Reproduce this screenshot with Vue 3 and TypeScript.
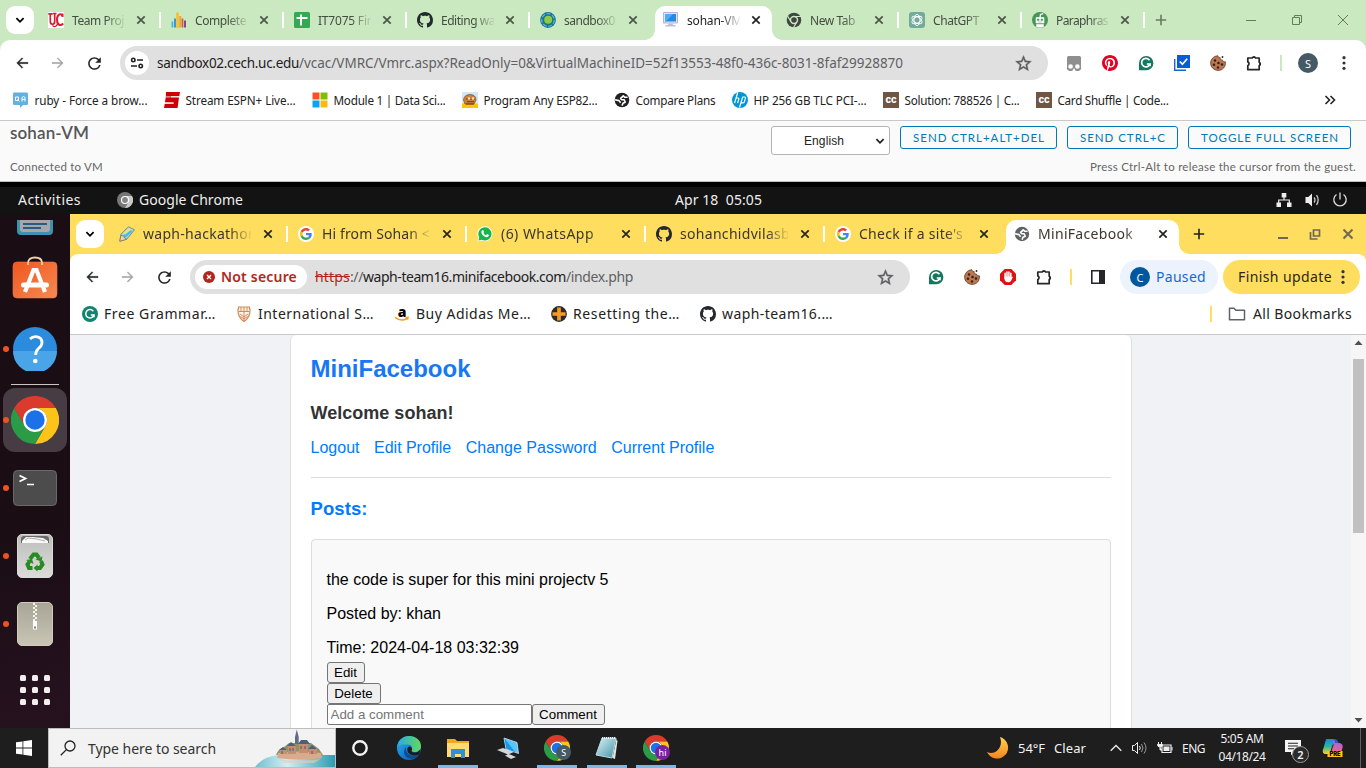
<script setup lang="ts">
interface Tab { icon: string; title: string; width: number; active?: boolean; sep?: boolean }
interface Mark { icon: string; label: string; width: number }

const outerTabs: Tab[] = [
  { icon: 'uc', title: 'Team Proj', width: 52, sep: true },
  { icon: 'bars', title: 'Complete', width: 51, sep: true },
  { icon: 'sheet', title: 'IT7075 Fin', width: 56, sep: true },
  { icon: 'github', title: 'Editing wa', width: 54, sep: true },
  { icon: 'globe', title: 'sandbox0', width: 51 },
  { icon: 'monitor', title: 'sohan-VM', width: 55, active: true },
  { icon: 'chromedark', title: 'New Tab', width: 45, sep: true },
  { icon: 'gpt', title: 'ChatGPT', width: 46, sep: true },
  { icon: 'robot', title: 'Paraphras', width: 52, sep: true }
]
const innerTabs: Tab[] = [
  { icon: 'pencil', title: 'waph-hackathon', width: 114, sep: true },
  { icon: 'google', title: 'Hi from Sohan <', width: 108, sep: true },
  { icon: 'whatsapp', title: '(6) WhatsApp', width: 93, sep: true },
  { icon: 'github', title: 'sohanchidvilasb', width: 110, sep: true },
  { icon: 'google', title: "Check if a site's", width: 104 },
  { icon: 'earth', title: 'MiniFacebook', width: 95, active: true }
]
const outerMarks: Mark[] = [
  { icon: 'qa', label: 'ruby - Force a brow...', width: 113 },
  { icon: 'espn', label: 'Stream ESPN+ Live...', width: 110 },
  { icon: 'ms', label: 'Module 1 | Data Sci...', width: 112 },
  { icon: 'bot', label: 'Program Any ESP82...', width: 114 },
  { icon: 'earthdark', label: 'Compare Plans', width: 80 },
  { icon: 'hp', label: 'HP 256 GB TLC PCI-...', width: 113 },
  { icon: 'cc', label: 'Solution: 788526 | C...', width: 115 },
  { icon: 'cc', label: 'Card Shuffle | Code...', width: 111 }
]
const innerMarks: Mark[] = [
  { icon: 'gram', label: 'Free Grammar…', width: 112 },
  { icon: 'shield', label: 'International S…', width: 116 },
  { icon: 'amazon', label: 'Buy Adidas Me…', width: 115 },
  { icon: 'plusbadge', label: 'Resetting the…', width: 107 },
  { icon: 'github', label: 'waph-team16.…', width: 111 }
]
const outerExt = ['tamper', 'pinterest', 'grammarly', 'check', 'cookie', 'puzzle']
const innerExt = ['grammarly', 'cookie', 'adblock', 'puzzle']
const links = [
  { label: 'Logout', width: 49 },
  { label: 'Edit Profile', width: 77 },
  { label: 'Change Password', width: 131 },
  { label: 'Current Profile', width: 103 }
]
const apps = [
  { icon: 'cortana', open: false },
  { icon: 'edge', open: false },
  { icon: 'explorer', open: true },
  { icon: 'remote', open: false },
  { icon: 'chrome', open: true, badge: 'S', tint: 'slate' },
  { icon: 'notepad', open: true },
  { icon: 'chrome', open: true, badge: 'hi', tint: 'purple' }
]

// Tracks a label out (or in) so it occupies the given width in pixels.
const vFit = {
  mounted(el: HTMLElement, binding: { value: number }) {
    const count = (el.textContent || '').length
    const natural = el.getBoundingClientRect().width
    if (count) el.style.letterSpacing = (binding.value - natural) / count + 'px'
  }
}
</script>

<template>
  <div class="screen">
    <svg class="defs" width="0" height="0" aria-hidden="true">
      <linearGradient id="g-edge" x1="0" y1="0" x2="1" y2="1"><stop offset="0" stop-color="#2fb4e8" /><stop offset=".45" stop-color="#1b86d6" /><stop offset="1" stop-color="#0c4f9c" /></linearGradient>
      <linearGradient id="g-edge2" x1="0" y1="0" x2="1" y2="0"><stop offset="0" stop-color="#29a9e8" /><stop offset="1" stop-color="#63d85a" /></linearGradient>
      <linearGradient id="g-moon" x1="0" y1="0" x2="0" y2="1"><stop offset="0" stop-color="#ffd34f" /><stop offset="1" stop-color="#f18421" /></linearGradient>
      <linearGradient id="g-cop" x1="0" y1="0" x2="0" y2="1"><stop offset="0" stop-color="#1d86e0" /><stop offset=".5" stop-color="#2bb6a0" /><stop offset="1" stop-color="#ffd21c" /></linearGradient>
      <linearGradient id="g-cop2" x1="0" y1="0" x2="0" y2="1"><stop offset="0" stop-color="#a45cf0" /><stop offset="1" stop-color="#f4667f" /></linearGradient>
      <linearGradient id="g-orange" x1="0" y1="0" x2="1" y2="1"><stop offset="0" stop-color="#f1561f" /><stop offset="1" stop-color="#f58a52" /></linearGradient>
      <linearGradient id="g-water" x1="0" y1="0" x2="1" y2="0"><stop offset="0" stop-color="#6fc0d0" /><stop offset=".4" stop-color="#d3eef3" /><stop offset="1" stop-color="#299db0" /></linearGradient>
      <linearGradient id="g-note" x1="0" y1="0" x2="1" y2="1"><stop offset="0" stop-color="#dff3f7" /><stop offset="1" stop-color="#3f93a6" /></linearGradient>
      <linearGradient id="g-bin" x1="0" y1="0" x2="0" y2="1"><stop offset="0" stop-color="#bdbdbb" /><stop offset="1" stop-color="#dcdcda" /></linearGradient>
      <linearGradient id="g-zip" x1="0" y1="0" x2="0" y2="1"><stop offset="0" stop-color="#a8a496" /><stop offset="1" stop-color="#c9c6b6" /></linearGradient>

      <symbol id="i-x" viewBox="0 0 10 10"><path d="M1.300 1.300l7.400 7.400M8.700 1.300L1.300 8.700" stroke="currentColor" stroke-width="1.700" /></symbol>
      <symbol id="i-down" viewBox="0 0 10 10"><path d="M1.400 3.200L5 6.800l3.600-3.600" fill="none" stroke="currentColor" stroke-width="1.800" /></symbol>
      <symbol id="i-plus" viewBox="0 0 12 12"><path d="M6 .8v10.400M.8 6h10.400" stroke="currentColor" stroke-width="1.600" /></symbol>
      <symbol id="i-back" viewBox="0 0 24 24"><path fill="currentColor" stroke="currentColor" stroke-width=".5" d="M21 11H7.800l5.600-5.600L12 4l-8 8 8 8 1.400-1.400L7.800 13H21z" /></symbol>
      <symbol id="i-fwd" viewBox="0 0 24 24"><path fill="currentColor" stroke="currentColor" stroke-width=".3" d="M3 11h13.200l-5.600-5.600L12 4l8 8-8 8-1.400-1.400 5.600-5.600H3z" /></symbol>
      <symbol id="i-reload" viewBox="0 0 24 24"><path fill="currentColor" d="M17.650 6.350A7.958 7.958 0 0 0 12 4c-4.420 0-7.990 3.580-7.990 8s3.570 8 7.990 8c3.730 0 6.840-2.550 7.730-6h-2.080A5.990 5.990 0 0 1 12 18c-3.310 0-6-2.690-6-6s2.690-6 6-6c1.660 0 3.140.69 4.220 1.780L13 11h7V4l-2.350 2.350z" /></symbol>
      <symbol id="i-star" viewBox="0 0 24 24"><path fill="currentColor" stroke="currentColor" stroke-width=".5" d="M22 9.240l-7.190-.62L12 2 9.190 8.630 2 9.240l5.460 4.730L5.820 21 12 17.270 18.180 21l-1.630-7.030L22 9.240zM12 15.400l-3.760 2.270 1-4.280-3.320-2.880 4.380-.38L12 6.100l1.710 4.040 4.380.38-3.320 2.880 1 4.280L12 15.400z" /></symbol>
      <symbol id="i-tune" viewBox="0 0 16 16"><g fill="none" stroke="#202124" stroke-width="1.600"><circle cx="4.300" cy="5" r="1.700" /><path d="M8 5h6M2 11h6" /><circle cx="11.700" cy="11" r="1.700" /></g></symbol>
      <symbol id="i-dots" viewBox="0 0 16 16"><g fill="#333"><circle cx="8" cy="2.700" r="1.600" /><circle cx="8" cy="8" r="1.600" /><circle cx="8" cy="13.300" r="1.600" /></g></symbol>

      <symbol id="i-uc" viewBox="0 0 16 16"><path d="M0 0h16v16H0z" fill="#fff" /><g fill="none" stroke="#d81e34"><path d="M.3 1.800h4.500M2.300 1.800v7.500c0 4 4.400 4 4.400 0V1.500M5 1.500h3.500" stroke-width="1.700" /><path d="M14.500 5V1.500M14.500 4C12.500.8 9 2.500 9 7.500s3 7.200 6.200 4" stroke-width="2" /><path d="M4.500 13.500c2.500 2.300 5.500.3 5-3.500" stroke-width="1.200" /></g></symbol>
      <symbol id="i-bars" viewBox="0 0 16 16"><path d="M1.400 9.500v6" stroke="#3db8e8" stroke-width="1.800" /><path d="M4 6.500v9" stroke="#2d8fd0" stroke-width="1.800" /><path d="M6.500 1.500v14" stroke="#f5c02d" stroke-width="2.600" stroke-linecap="round" /><path d="M9.200 4v11.500" stroke="#efa13a" stroke-width="2" /><path d="M11.500 6.500v9" stroke="#d9573c" stroke-width="1.700" /><path d="M14 8.500v7" stroke="#6a3f8d" stroke-width="1.800" /></symbol>
      <symbol id="i-sheet" viewBox="0 0 16 16"><rect width="16" height="16" rx="1.500" fill="#34a853" /><path d="M2.500 6h11M7 2.500v11" stroke="#fff" stroke-width="2" /></symbol>
      <symbol id="i-github" viewBox="0 0 16 16"><path fill="#24292f" d="M8 0C3.58 0 0 3.58 0 8c0 3.54 2.29 6.53 5.47 7.59.4.07.55-.17.55-.38 0-.19-.01-.82-.01-1.49-2.01.37-2.53-.49-2.69-.94-.09-.23-.48-.94-.82-1.13-.28-.15-.68-.52-.01-.53.63-.01 1.08.58 1.23.82.72 1.21 1.87.87 2.33.66.07-.52.28-.87.51-1.07-1.78-.2-3.64-.89-3.64-3.95 0-.87.31-1.59.82-2.15-.08-.2-.36-1.02.08-2.12 0 0 .67-.21 2.2.82.64-.18 1.32-.27 2-.27.68 0 1.36.09 2 .27 1.53-1.04 2.2-.82 2.2-.82.44 1.1.16 1.92.08 2.12.51.56.82 1.27.82 2.15 0 3.07-1.87 3.75-3.65 3.95.29.25.54.73.54 1.48 0 1.07-.01 1.93-.01 2.2 0 .21.15.46.55.38A8.013 8.013 0 0 0 16 8c0-4.42-3.58-8-8-8z" /></symbol>
      <symbol id="i-globe" viewBox="0 0 16 16"><circle cx="8" cy="8" r="7.900" fill="#1c6f9e" /><circle cx="8" cy="8" r="6.300" fill="none" stroke="#57b5d8" stroke-width="1.300" stroke-dasharray="4 1.500" /><circle cx="8" cy="8" r="5" fill="#247a55" /><circle cx="8.200" cy="7.800" r="4" fill="#8ccb4a" /></symbol>
      <symbol id="i-monitor" viewBox="0 0 16 16"><path d="M.5.500h14v10.500H.5z" fill="#e6e2f0" stroke="#b9b2cf" /><path d="M2 2h11v7.500H2z" fill="#2389e4" /><path d="M2 2h8L3 9.500H2z" fill="#52aef4" /><path d="M5.500 11.500h4l.5 1.500h2.500v1.500h-10V13H5z" fill="#c3bdd3" /></symbol>
      <symbol id="i-chromedark" viewBox="0 0 16 16"><circle cx="8" cy="8" r="7.300" fill="#3f4540" /><circle cx="8" cy="8" r="3.500" fill="none" stroke="#cbe9c0" stroke-width="1.400" /><path d="M8 4.500h7M5 9.800L1.500 4M11 9.800L7.500 15.500" stroke="#cbe9c0" stroke-width="1.200" /></symbol>
      <symbol id="i-gpt" viewBox="0 0 16 16"><rect width="16" height="16" rx="3" fill="#74aa9c" /><g fill="none" stroke="#fff" stroke-width=".9"><ellipse cx="8" cy="8" rx="3" ry="5.600" /><ellipse cx="8" cy="8" rx="3" ry="5.600" transform="rotate(60 8 8)" /><ellipse cx="8" cy="8" rx="3" ry="5.600" transform="rotate(120 8 8)" /></g></symbol>
      <symbol id="i-robot" viewBox="0 0 16 16"><circle cx="8" cy="8" r="8" fill="#499557" /><path d="M4 5.500h8V11H4zM4.500 12.500h7v2.200q-3.500 1.300-7 0z" fill="#fff" stroke="#fff" stroke-width=".6" stroke-linejoin="round" /><path d="M8 5.500L8.500 2.500l2.700-.8" fill="none" stroke="#fff" stroke-width="1.300" /><path d="M5.300 7h1.700v1.500H5.300zM9 7h1.700v1.500H9zM6.300 10h3.400" fill="#499557" stroke="#499557" stroke-width=".5" /></symbol>

      <symbol id="i-tamper" viewBox="0 0 16 16"><path d="M2.500 1h11Q15 1 15 2.500V12a3.200 3.200 0 0 1-6.500 1.500h-1A3.200 3.200 0 0 1 1 12V2.500Q1 1 2.500 1z" fill="#8f8f8f" /><circle cx="4.600" cy="11.500" r="2.300" fill="#fff" /><circle cx="11.400" cy="11.500" r="2.300" fill="#fff" /></symbol>
      <symbol id="i-pinterest" viewBox="0 0 24 24"><path fill="#e60023" d="M12 0C5.370 0 0 5.370 0 12c0 5.080 3.160 9.420 7.620 11.170-.1-.95-.2-2.4.04-3.440.22-.94 1.410-5.960 1.410-5.960s-.36-.72-.36-1.780c0-1.670.97-2.910 2.170-2.910 1.020 0 1.520.77 1.520 1.690 0 1.030-.66 2.570-1 4-.28 1.190.6 2.170 1.780 2.170 2.130 0 3.770-2.250 3.770-5.5 0-2.870-2.060-4.880-5.010-4.880-3.410 0-5.420 2.560-5.420 5.200 0 1.030.4 2.130.89 2.730.1.12.11.22.08.34l-.33 1.360c-.05.22-.17.27-.4.160-1.500-.7-2.430-2.880-2.430-4.640 0-3.780 2.750-7.250 7.920-7.250 4.160 0 7.390 2.960 7.390 6.920 0 4.130-2.600 7.460-6.220 7.460-1.210 0-2.360-.63-2.750-1.380l-.75 2.850c-.27 1.040-1 2.350-1.490 3.150C9.570 23.810 10.760 24 12 24c6.630 0 12-5.370 12-12S18.630 0 12 0z" /></symbol>
      <symbol id="i-grammarly" viewBox="0 0 16 16"><path d="M1 15.300V8a7.200 7.200 0 1 1 7.200 7.300z" fill="#15775f" /><path d="M11.500 5.200A4.300 4.300 0 1 0 12 9H8.800M12 9.200v2" fill="none" stroke="#fff" stroke-width="1.700" /></symbol>
      <symbol id="i-gram" viewBox="0 0 16 16"><circle cx="8" cy="8" r="8" fill="#11836f" /><path d="M11.300 5.200A4.200 4.200 0 1 0 12 9H8.800M12 8.800v2.400" fill="none" stroke="#fff" stroke-width="1.500" /></symbol>
      <symbol id="i-check" viewBox="0 0 16 16"><path d="M.7 4v11.300H12" fill="none" stroke="#1b65d5" stroke-width="1.400" /><path d="M3 0h13v13H3z" fill="#0c5bd6" /><path d="M5.800 6.500l2.600 2.700 4.800-5.400" fill="none" stroke="#fff" stroke-width="1.700" /></symbol>
      <symbol id="i-cookie" viewBox="0 0 16 16"><path d="M8 .8c.2 1.500 1 2 2.200 1.700-.3 1.700.8 2.800 2.300 2.500.2 1.500 1.200 2 2.900 1.800C16 12 12.500 15.400 8.200 15.400S.6 12 .6 8.300 3.500.8 8 .8z" fill="#b97850" stroke="#4c2a1e" stroke-width=".7" /><g fill="#3b2018"><circle cx="5" cy="5.500" r="1.200" /><circle cx="4" cy="9.800" r="1.300" /><circle cx="8.500" cy="8" r="1.300" /><circle cx="8" cy="12.500" r="1.200" /><circle cx="12" cy="9.500" r="1.300" /><circle cx="12.500" cy="2" r=".9" /></g></symbol>
      <symbol id="i-puzzle" viewBox="0 0 16 16"><path d="M1.800 3h4.500a1.700 1.700 0 0 1 3.200 0h3.700v4.300a1.700 1.700 0 0 1 0 3.200v4.200H1.800v-4.100a2 2 0 0 0 0-3.700z" fill="none" stroke="#252628" stroke-width="1.700" stroke-linejoin="round" /><path d="M6.300 3a1.700 1.700 0 0 1 3.200 0zM13.200 7.300a1.700 1.700 0 0 1 0 3.200z" fill="#252628" /></symbol>
      <symbol id="i-adblock" viewBox="0 0 16 16"><path d="M4.700 0h6.600L16 4.700v6.600L11.300 16H4.700L0 11.300V4.700z" fill="#dd1212" /><path d="M5.100 9V4.300M7 8V2.900M8.900 8V2.900M10.800 9V4.300" stroke="#fff" stroke-width="1.500" stroke-linecap="round" /><path d="M4.400 7.500h7.200v.8l1.500-.8-2 4.300q-.8 1.500-2.800 1.500-3.900 0-3.900-4z" fill="#fff" /></symbol>
      <symbol id="i-panel" viewBox="0 0 16 16"><path d="M1.800 1.800h12.400v12.400H1.800z" fill="none" stroke="#252628" stroke-width="1.600" /><path d="M9 1h6v14H9z" fill="#252628" /></symbol>
      <symbol id="i-folder" viewBox="0 0 18 16"><path d="M1.500 2.300H6l1.800 1.900h8.700v9.500h-15z" fill="none" stroke="#5f6368" stroke-width="1.500" stroke-linejoin="round" /></symbol>

      <symbol id="i-qa" viewBox="0 0 16 16"><path d="M1.300.5h12.400q1.300 0 1.300 1.300v9.900q0 1.300-1.300 1.300H10l-3 3v-3H1.300Q0 13 0 11.700V1.800Q0 .5 1.300.5z" fill="#64b0df" /><path d="M2.500 5h3v3.500h-3zM4.500 7.500l1.800 2M9 9.500V5.500L10.500 4.500 12 5.500v4M9 7.500h3" fill="none" stroke="#fff" stroke-width="1" /></symbol>
      <symbol id="i-espn" viewBox="0 0 16 16"><path d="M2 0h14l-.7 4.300H6.500v1H15L13.600 16H0l.7-4.300h8.800V10.500H.900L1.800 5z" fill="#ce0007" /><path d="M1.600 4.900h4.600M7 4.900h8.200M.6 11h9" stroke="#fff" stroke-width=".8" /></symbol>
      <symbol id="i-ms" viewBox="0 0 16 16"><path d="M.5.500h7v7h-7z" fill="#f35325" /><path d="M8.500.5h7v7h-7z" fill="#81bc06" /><path d="M.5 8.500h7v7h-7z" fill="#05a6f0" /><path d="M8.500 8.500h7v7h-7z" fill="#ffba08" /></symbol>
      <symbol id="i-bot" viewBox="0 0 16 16"><path d="M0 0h16v16H0z" fill="#cfe9fa" /><path d="M0 11.500h16V16H0z" fill="#ffc400" /><path d="M1.500 8q.5-5 6-5.500Q14 2.500 14 8l-2 4H3z" fill="#cd8237" stroke="#79451d" stroke-width=".7" /><path d="M4 7h9M5 9.700h7M4 12h8" stroke="#6d3f1d" stroke-width="1" /><circle cx="7" cy="6.500" r="1.300" fill="#ffe3a7" /><circle cx="11" cy="6.500" r="1.300" fill="#ffe3a7" /></symbol>
      <symbol id="i-earthdark" viewBox="0 0 16 16"><circle cx="8" cy="8" r="7.300" fill="#202124" /><path d="M13.600 5.300h-3L9.300 3.800 6.600 6.400l1.200 1.400h2.400l1 2.400-2.200 1-1 2.400M1 7.800l4 .8 1.600 2.200" fill="none" stroke="#fff" stroke-width="1.600" stroke-linejoin="round" /></symbol>
      <symbol id="i-earth" viewBox="0 0 16 16"><circle cx="8" cy="8" r="7.200" fill="#5f6368" /><path d="M13.600 5.300h-3L9.300 3.800 6.600 6.400l1.200 1.400h2.400l1 2.400-2.200 1-1 2.400M1 7.800l4 .8 1.600 2.200" fill="none" stroke="#fff" stroke-width="1.600" stroke-linejoin="round" /></symbol>
      <symbol id="i-hp" viewBox="0 0 16 16"><circle cx="8" cy="8" r="8" fill="#0096d6" /><g fill="none" stroke="#fff" stroke-width="1.200"><path d="M5.700.5L2.600 11.200M4.100 6h2q1 0 .7 1.200l-1.200 4M10.700 4.800L7.500 15.500M10.700 5h2q1 0 .7 1.200l-1 3.600q-.3 1-1.300 1H9" /></g></symbol>
      <symbol id="i-cc" viewBox="0 0 16 16"><path d="M0 0h16v16H0z" fill="#6f5544" /><text x="8" y="11" text-anchor="middle" fill="#fff" font-family="Inter, sans-serif" font-weight="800" font-size="9.500" letter-spacing="-.2">cc</text></symbol>
      <symbol id="i-shield" viewBox="0 0 16 16"><path d="M2.500 1h11v2l.6.600Q14 12 8 15.500 2 12 1.900 3.600L2.500 3z" fill="#fff4e9" stroke="#cf8b58" stroke-width="1.200" /><path d="M2.500 5.500h11M5 1v4.500M8 1v14M11 1v4.500M4 8l4 3 4-3M4.500 10.500L8 13l3.500-2.500" fill="none" stroke="#cf8b58" stroke-width="1" /></symbol>
      <symbol id="i-amazon" viewBox="0 0 16 16"><text x="8" y="10.500" text-anchor="middle" font-family="Open Sans, sans-serif" font-weight="800" font-size="14">a</text><path d="M1 11.300q6.300 4.800 12 1.200M11.500 11.500l2.600-.2-.7 2.500" fill="none" stroke="#f6a11c" stroke-width="1.500" /></symbol>
      <symbol id="i-plusbadge" viewBox="0 0 16 16"><circle cx="8" cy="8" r="7.900" fill="#2d2b2a" /><path d="M8 1.500v13M1.500 8h13" stroke="#f79c20" stroke-width="3.700" /></symbol>
      <symbol id="i-pencil" viewBox="0 0 16 16"><path d="M.8 15.200L2 8 9.500.8l6 3L8 13z" fill="#9adcef" stroke="#7f8272" stroke-width=".9" /><path d="M4 9.500L11.500 4l2 1.400L6.500 12z" fill="#4bbce8" /><path d="M4.500 7L10 2l2.500 1.200L6 8.500z" fill="#f0e27a" /><path d="M2 9.500l3 .5.500 2L7.500 13.300.8 15.200z" fill="#ead6ad" stroke="#786e58" stroke-width=".7" /></symbol>
      <symbol id="i-google" viewBox="-8 -8 64 64"><circle cx="24" cy="24" r="32" fill="#fff" /><path fill="#EA4335" d="M24 9.500c3.540 0 6.710 1.220 9.210 3.600l6.850-6.850C35.900 2.380 30.470 0 24 0 14.620 0 6.510 5.380 2.560 13.220l7.980 6.190C12.430 13.720 17.740 9.500 24 9.500z" /><path fill="#4285F4" d="M46.980 24.550c0-1.570-.15-3.090-.38-4.550H24v9.020h12.940c-.58 2.960-2.260 5.480-4.780 7.180l7.730 6c4.510-4.180 7.090-10.360 7.090-17.650z" /><path fill="#FBBC05" d="M10.530 28.590c-.48-1.450-.76-2.990-.76-4.590s.27-3.140.76-4.590l-7.980-6.190C.92 16.460 0 20.120 0 24s.92 7.540 2.560 10.780l7.970-6.190z" /><path fill="#34A853" d="M24 48c6.480 0 11.930-2.130 15.890-5.810l-7.730-6c-2.150 1.450-4.920 2.300-8.160 2.300-6.260 0-11.570-4.220-13.470-9.910l-7.980 6.190C6.510 42.620 14.620 48 24 48z" /></symbol>
      <symbol id="i-whatsapp" viewBox="0 0 16 16"><path d="M.4 15.600l1-4A7.500 7.500 0 1 1 4.500 14.500z" fill="#fff" /><path d="M1.400 14.600l.9-3.200a6.600 6.600 0 1 1 2.400 2.300z" fill="#16b64c" /><path d="M5.300 4.300c1-.8 1.300.2 1.800 1.600-.8 1-.7.900.2 2.100 1 1 1.300 1.200 2.100.9l.7-.8 1.800 1c0 2-1.700 2.500-3.300 1.900-2.600-1-5-3.600-4-5.900z" fill="#fff" /></symbol>

      <symbol id="i-chrome" viewBox="0 0 48 48"><path fill="#db3b2c" d="M3.200 12A24 24 0 0 1 44.800 12H24A12 12 0 0 0 13.600 30z" /><path fill="#fcc419" d="M44.800 12A24 24 0 0 1 24 48l10.400-18A12 12 0 0 0 24 12z" /><path fill="#2a9c48" d="M24 48A24 24 0 0 1 3.200 12l10.400 18a12 12 0 0 0 20.800 0z" /><circle cx="24" cy="24" r="12" fill="#fff" /><circle cx="24" cy="24" r="9.700" fill="#1b72e8" /></symbol>
      <symbol id="i-chromegray" viewBox="0 0 16 16"><circle cx="8" cy="8" r="8" fill="#777" /><path d="M8 16A8 8 0 0 0 15 4H8v4l3 3z" fill="#c9c9c9" /><circle cx="8" cy="8" r="3.500" fill="#858585" stroke="#fff" stroke-width="1.200" /></symbol>
      <symbol id="i-network" viewBox="0 0 16 16"><path d="M5.700 1h4.600v4.500H5.700zM.5 10.500H5V15H.5zM11 10.500h4.500V15H11z" fill="#eee" /><path d="M8 5v3M2.700 11V8h10.600v3" fill="none" stroke="#eee" stroke-width="1.200" /></symbol>
      <symbol id="i-sound" viewBox="0 0 16 16"><path d="M1.500 5h2.800L8 1.500v13L4.300 11H1.500z" fill="#eee" /><path d="M10 5.500q2 2.500 0 5M12.500 3.200q3.300 4.800 0 9.600" fill="none" stroke="#ccc" stroke-width="1.300" /></symbol>
      <symbol id="i-power" viewBox="0 0 16 16"><path d="M8 .5v7M4.500 2.500a6.200 6.200 0 1 0 7 0" fill="none" stroke="#ddd" stroke-width="1.300" /></symbol>

      <symbol id="i-doc" viewBox="0 0 36 16"><path d="M0 0h36v11q0 4-4 4H4q-4 0-4-4z" fill="#3d91b1" /><path d="M3 0h30v9q0 3-3 3H6q-3 0-3-3z" fill="#a7a7aa" /><path d="M6 4h24M6 8h18" stroke="#285c82" stroke-width="2" /></symbol>
      <symbol id="i-store" viewBox="0 0 46 44"><rect x="1" y="7" width="44" height="36" rx="4" fill="url(#g-orange)" stroke="#e8754a" stroke-width=".6" /><path d="M16 10V8q0-5.500 7-5.500T30 8v2" fill="none" stroke="#f6d1a2" stroke-width="1.800" /><path d="M13 37l8.500-22h3L33 37" fill="none" stroke="#fff" stroke-width="4.200" /><rect x="9" y="27.500" width="28" height="5" rx="2.500" fill="#fff" /></symbol>
      <symbol id="i-help" viewBox="0 0 44 44"><circle cx="22" cy="22" r="22" fill="#2b8bdc" /><path d="M0 24h44a22 22 0 0 1-44 0z" fill="#4aa5e8" /><path d="M17 12q2.500-2.500 6-2.300 6 .5 6 6 0 3-3.500 5.800-2.800 2.500-2.800 6.500" fill="none" stroke="#fff" stroke-width="2.800" /><circle cx="22.300" cy="34" r="2.300" fill="#fff" /></symbol>
      <symbol id="i-term" viewBox="0 0 44 36"><rect x=".5" y=".5" width="43" height="35" rx="4" fill="#4b4c4b" stroke="#686968" /><path d="M6.500 5.500l6 3-6 3" fill="none" stroke="#fff" stroke-width="1.800" /><path d="M14 14.500h7" stroke="#fff" stroke-width="1.500" /></symbol>
      <symbol id="i-trash" viewBox="0 0 36 44"><rect x=".5" y=".5" width="35" height="43" rx="4.500" fill="url(#g-bin)" stroke="#dadad8" /><path d="M4 9V5q0-3 3-3h22q3 0 3 3v4z" fill="#6a6a6a" /><path d="M5 9V7l4-4h7l10 1 5 3v2z" fill="#f8f8f8" /><path d="M8 6l3-2 9 1 8 2" fill="none" stroke="#9a9a9a" stroke-width=".8" /><g fill="none" stroke="#278b23" stroke-width="4"><path d="M13 25l3.500-4.500h3L22 24" /><path d="M24 27l1.500 3.500-2.500 3.500H19" /><path d="M15.500 34H12l-1.500-3.500 2-3" /></g><g fill="#278b23"><path d="M18.500 25.500l7-3-1 5zM20.500 30.500v7l-4-3.500zM9 26l6-1 1.500 5z" /></g></symbol>
      <symbol id="i-archive" viewBox="0 0 36 44"><rect x=".5" y=".5" width="35" height="43" rx="4.500" fill="url(#g-zip)" stroke="#cfccbe" /><path d="M17 1v19" stroke="#f5f5ef" stroke-width="2" stroke-dasharray="2 2" /><path d="M19 3v18" stroke="#f5f5ef" stroke-width="2" stroke-dasharray="2 2" /><path d="M16 19h4v8.500h-4z" fill="#fff" /><path d="M17 24.500h2v2h-2z" fill="#827f72" /></symbol>
      <symbol id="i-grid" viewBox="0 0 30 30"><g fill="#f1efed"><rect width="6" height="6" rx="1.500" /><rect x="12" width="6" height="6" rx="1.500" /><rect x="24" width="6" height="6" rx="1.500" /><rect y="12" width="6" height="6" rx="1.500" /><rect x="12" y="12" width="6" height="6" rx="1.500" /><rect x="24" y="12" width="6" height="6" rx="1.500" /><rect y="24" width="6" height="6" rx="1.500" /><rect x="12" y="24" width="6" height="6" rx="1.500" /><rect x="24" y="24" width="6" height="6" rx="1.500" /></g></symbol>

      <symbol id="i-cortana" viewBox="0 0 26 26"><circle cx="13" cy="13" r="6.700" fill="none" stroke="#f5f5f5" stroke-width="2.400" /></symbol>
      <symbol id="i-edge" viewBox="0 0 26 26"><circle cx="13" cy="13" r="12" fill="url(#g-edge)" /><path d="M1.200 12C2 5 7 1 13 1c7 0 12 4.500 12 10 0 4-3 6-6.500 6-2.500 0-3.700-1-3-2 1.500-2 .5-5.500-3.500-5.500C7 9.500 3 9 1.200 12z" fill="url(#g-edge2)" /><path d="M10 14c0 5 5.500 8.500 12.500 6.500C18 26 8 24 8 17q0-3 2-5z" fill="#0b4c93" /><path d="M16 14.500c-1 2 0 3.500 3.500 3q3-.5 4.800-3l-1 5c-6 2.500-12 0-12-5 0-2 1-3 2.200-3 1.600 0 2.800 1.400 2.500 3z" fill="#1c1c1c" /></symbol>
      <symbol id="i-explorer" viewBox="0 0 26 26"><path d="M2 4h8l2 2h12v16H2z" fill="#f2a917" /><path d="M2 8h22v14H2z" fill="#ffdc6d" /><path d="M6 14h14v9h-4v-4h-6v4H6z" fill="#328ed9" /></symbol>
      <symbol id="i-remote" viewBox="0 0 26 26"><path d="M9 3l13 4.500 1.500 11L11 14z" fill="#59c3fb" stroke="#cde9f6" stroke-width=".8" /><path d="M9.500 3.500l11 14L11.300 13.600z" fill="#1497ec" /><path d="M2 15l6-2 11 4-6 2.500zM10 20.500l4-1.500 7 3-5 2z" fill="#d0d6d9" /></symbol>
      <symbol id="i-notepad" viewBox="0 0 26 26"><path d="M8 3h14l-4 20L2 20z" fill="url(#g-note)" stroke="#b6dce5" /><path d="M18.500 23l4-19 1 2-2.500 18z" fill="#e4e5df" /><path d="M8 3h14" stroke="#eee" stroke-width="2" stroke-dasharray="1 1" /></symbol>
      <symbol id="i-win" viewBox="0 0 16 16"><path d="M0 2.300L6.500 1.400v6.200H0zM7.300 1.300L16 0v7.600H7.300zM0 8.400h6.500v6.200L0 13.700zM7.300 8.400H16V16l-8.700-1.300z" fill="#fff" /></symbol>
      <symbol id="i-search" viewBox="0 0 16 16"><circle cx="10" cy="6" r="5" fill="none" stroke="#222" stroke-width="1.300" /><path d="M6.400 9.600L.8 15.200" stroke="#222" stroke-width="1.300" /></symbol>
      <symbol id="i-castle" viewBox="0 0 80 38">
        <path d="M0 38Q8 27 24 26h56v12z" fill="url(#g-water)" />
        <path d="M21 26q2-6 8-8l5-4h22l8 6 4 6z" fill="#8f9466" />
        <path d="M23 24q22-3 43 0l1 5q-22 3-45 0z" fill="#d9ab8c" />
        <path d="M33 16h8v9h-8zM44 14h9v10h-9zM25 20h7v5h-7zM54 19h8v6h-8z" fill="#c28f75" />
        <path d="M32 17l4-4 5 4zM43 15l3-4h6l3 4zM53 20l4-4 5 4zM24 21l4-3 4 3z" fill="#4c6078" />
        <path d="M40 15V8l1.800-7.500L43.700 8v7z" fill="#5d6d84" />
        <path d="M27 22v3M35 19v3M38 19v3M46 17v3M50 17v3M57 22v3" stroke="#6a5150" />
        <path d="M24 30q20 3 42 0l-7 4H30z" fill="#e6cbb2" opacity=".6" />
      </symbol>
      <symbol id="i-moon" viewBox="0 0 22 22"><path d="M13 0a11 11 0 1 1-13 15C8 19 17 10 13 0z" fill="url(#g-moon)" /></symbol>
      <symbol id="i-up" viewBox="0 0 12 8"><path d="M.7 6.800L6 1.500l5.300 5.300" fill="none" stroke="#eee" stroke-width="1.300" /></symbol>
      <symbol id="i-vol" viewBox="0 0 16 14"><path d="M1 4.500h2L6 1.500v11L3 9.500H1z" fill="none" stroke="#eee" /><path d="M8 5q1.500 2 0 4" fill="none" stroke="#eee" /><path d="M10 3q3 4 0 8M12.500 1.500q4 5.500 0 11" fill="none" stroke="#999" /></symbol>
      <symbol id="i-batt" viewBox="0 0 16 14"><path d="M5.500 4h9v7.500h-9z" fill="none" stroke="#eee" stroke-width="1.200" /><path d="M7 5.500h6V10H7zM15 6h1v3.500h-1z" fill="#eee" /><path d="M2 1v2M5 1v2M1 3.500h5Q6 6 3.500 6T1 3.500zM3.500 6v3h2" fill="#eee" stroke="#eee" /></symbol>
      <symbol id="i-note" viewBox="0 0 16 16"><path d="M0 0h16v12H9l-3 3.500V12H0z" fill="#f5f5f5" /><path d="M3 3.300h10M3 6h10M3 8.700h6" stroke="#222" stroke-width="1.100" /></symbol>
      <symbol id="i-copilot" viewBox="0 0 20 20"><path d="M4 1h6q2 0 3 3l-3 3-3 9H2q-3-1-1-6l2-7q.5-2 1-2z" fill="url(#g-cop)" /><path d="M9 1q3 0 4 4h4q4 1 3 5l-2 6H8l3-9q1-4-2-6z" fill="url(#g-cop2)" /><path d="M9 1q3 0 4 4h3q-1-4-4-4z" fill="#2f59d0" /><path d="M5 13h15v6H5z" fill="#ffc912" /><text x="12.500" y="18" text-anchor="middle" font-family="Inter, sans-serif" font-size="5.800" font-weight="900">PRE</text></symbol>
    </svg>

    <!-- host browser -->
    <header class="browser host">
      <div class="strip">
        <button class="tabsearch"><svg width="10" height="10"><use href="#i-down" /></svg></button>
        <div v-for="t in outerTabs" :key="t.title" class="tab" :class="{ active: t.active, sep: t.sep }">
          <div class="face">
            <svg width="16" height="16"><use :href="'#i-' + t.icon" /></svg>
            <div class="title"><span v-fit="t.width">{{ t.title }}</span></div>
            <svg class="close" width="10" height="10"><use href="#i-x" /></svg>
          </div>
        </div>
        <svg class="newtab" width="12" height="12"><use href="#i-plus" /></svg>
        <div class="winctl">
          <svg width="46" height="20" fill="none" stroke="#68795f"><path d="M18 10.500h10" /></svg>
          <svg width="46" height="20" fill="none" stroke="#68795f"><path d="M18.500 7.500h7v7h-7zM20.500 7.500v-2h7v7h-2" /></svg>
          <svg width="46" height="20" fill="none" stroke="#68795f"><path d="M18 5l10 10M28 5L18 15" /></svg>
        </div>
      </div>
      <div class="tools">
        <i class="cell"><svg width="16" height="16"><use href="#i-back" /></svg></i>
        <i class="cell dim"><svg width="16" height="16"><use href="#i-fwd" /></svg></i>
        <i class="cell"><svg width="19" height="19"><use href="#i-reload" /></svg></i>
        <div class="omni">
          <i class="site"><svg width="16" height="16"><use href="#i-tune" /></svg></i>
          <span v-fit="142" class="dark">sandbox02.cech.uc.edu</span><span v-fit="604">/vcac/VMRC/Vmrc.aspx?ReadOnly=0&amp;VirtualMachineID=52f13553-48f0-436c-8031-8faf29928870</span>
          <svg class="fav" width="19" height="19"><use href="#i-star" /></svg>
        </div>
        <div class="exts"><i v-for="e in outerExt" :key="e" class="cell"><svg width="16" height="16"><use :href="'#i-' + e" /></svg></i></div>
        <i class="rule"></i>
        <i class="cell"><b class="avatar">S</b></i>
        <i class="cell"><svg width="16" height="16"><use href="#i-dots" /></svg></i>
      </div>
      <div class="marks">
        <div v-for="m in outerMarks" :key="m.label" class="mark">
          <svg width="16" height="16"><use :href="'#i-' + m.icon" /></svg><span v-fit="m.width">{{ m.label }}</span>
        </div>
        <svg class="more" width="12" height="10" fill="none" stroke="#222" stroke-width="1.600"><path d="M1.500 1l4 4-4 4M6.500 1l4 4-4 4" /></svg>
      </div>
    </header>

    <!-- remote console header -->
    <section class="console">
      <div class="vm"><h1><span v-fit="79">sohan-VM</span></h1><p><span v-fit="93">Connected to VM</span></p></div>
      <div class="actions">
        <div class="row">
          <div class="lang"><span v-fit="40">English</span><svg width="10" height="10"><use href="#i-down" /></svg></div>
          <button class="send w1"><span v-fit="132">SEND CTRL+ALT+DEL</span></button>
          <button class="send w2"><span v-fit="86">SEND CTRL+C</span></button>
          <button class="send w3"><span v-fit="138">TOGGLE FULL SCREEN</span></button>
        </div>
        <p><span v-fit="266">Press Ctrl-Alt to release the cursor from the guest.</span></p>
      </div>
    </section>

    <!-- guest desktop -->
    <nav class="topbar">
      <span v-fit="63" class="act">Activities</span>
      <svg width="16" height="16"><use href="#i-chromegray" /></svg>
      <span v-fit="104" class="app">Google Chrome</span>
      <span v-fit="87" class="clock">Apr 18&nbsp; 05:05</span>
      <div class="status">
        <svg width="16" height="16"><use href="#i-network" /></svg>
        <svg width="16" height="16"><use href="#i-sound" /></svg>
        <svg width="16" height="16"><use href="#i-power" /></svg>
      </div>
    </nav>

    <main class="guest">
      <aside class="dock">
        <div class="slot doc"><svg width="36" height="16"><use href="#i-doc" /></svg></div>
        <div class="slot"><svg width="46" height="44"><use href="#i-store" /></svg></div>
        <div class="slot run"><svg width="44" height="44"><use href="#i-help" /></svg></div>
        <hr>
        <div class="slot run current"><svg width="48" height="48"><use href="#i-chrome" /></svg></div>
        <div class="slot run"><svg width="44" height="36"><use href="#i-term" /></svg></div>
        <div class="slot run"><svg width="36" height="44"><use href="#i-trash" /></svg></div>
        <div class="slot run last"><svg width="36" height="44"><use href="#i-archive" /></svg></div>
        <div class="slot"><svg width="30" height="30"><use href="#i-grid" /></svg></div>
      </aside>

      <div class="browser inner">
        <div class="strip">
          <button class="tabsearch"><svg width="10" height="10"><use href="#i-down" /></svg></button>
          <div v-for="t in innerTabs" :key="t.title" class="tab" :class="{ active: t.active, sep: t.sep }">
            <div class="face">
              <svg width="16" height="16"><use :href="'#i-' + t.icon" /></svg>
              <div class="title"><span v-fit="t.width">{{ t.title }}</span></div>
              <svg class="close" width="10" height="10"><use href="#i-x" /></svg>
            </div>
          </div>
          <svg class="newtab" width="12" height="12"><use href="#i-plus" /></svg>
          <div class="winctl">
            <svg width="32" height="20" fill="none" stroke="#6f6857" stroke-width="2"><path d="M11 14h10" /></svg>
            <svg width="33" height="20" fill="none" stroke="#6f6857" stroke-width="1.700"><path d="M14.500 6h6v6h-6zM11.500 8v7h7" /></svg>
            <svg width="33" height="20" fill="none" stroke="#6f6857" stroke-width="2"><path d="M11.500 5.500l9 9M20.500 5.500l-9 9" /></svg>
          </div>
        </div>
        <div class="tools">
          <i class="cell"><svg width="16" height="16"><use href="#i-back" /></svg></i>
          <i class="cell dim"><svg width="16" height="16"><use href="#i-fwd" /></svg></i>
          <i class="cell"><svg width="19" height="19"><use href="#i-reload" /></svg></i>
          <div class="omni">
            <div class="chip"><svg width="12" height="12"><circle cx="6" cy="6" r="6" fill="#b3261e" /><path d="M4 4l4 4M8 4L4 8" stroke="#fff" stroke-width="1.300" /></svg><span v-fit="76">Not secure</span></div>
            <s v-fit="35">https</s><span v-fit="13">://</span><span v-fit="203" class="dark">waph-team16.minifacebook.com</span><span v-fit="67">/index.php</span>
            <svg class="fav" width="19" height="19"><use href="#i-star" /></svg>
          </div>
          <div class="exts"><i v-for="e in innerExt" :key="e" class="cell"><svg width="16" height="16"><use :href="'#i-' + e" /></svg></i></div>
          <i class="rule"></i>
          <i class="cell"><svg width="16" height="16"><use href="#i-panel" /></svg></i>
          <div class="paused"><b class="avatar">C</b><span v-fit="50">Paused</span></div>
          <div class="finish"><span v-fit="94">Finish update</span><svg width="16" height="16"><use href="#i-dots" /></svg></div>
        </div>
        <div class="marks">
          <div v-for="m in innerMarks" :key="m.label" class="mark">
            <svg width="16" height="16"><use :href="'#i-' + m.icon" /></svg><span v-fit="m.width">{{ m.label }}</span>
          </div>
          <div class="all"><i class="rule"></i><svg width="18" height="16"><use href="#i-folder" /></svg><span v-fit="99">All Bookmarks</span></div>
        </div>

        <div class="viewport">
          <div class="card">
            <h2><span v-fit="160">MiniFacebook</span></h2>
            <h3><span v-fit="143">Welcome sohan!</span></h3>
            <div class="links"><a v-for="l in links" :key="l.label"><span v-fit="l.width">{{ l.label }}</span></a></div>
            <hr>
            <h3 class="posts"><span v-fit="57">Posts:</span></h3>
            <article>
              <p><span v-fit="282">the code is super for this mini projectv 5</span></p>
              <p><span v-fit="114.500">Posted by: khan</span></p>
              <p><span v-fit="192.500">Time: 2024-04-18 03:32:39</span></p>
              <button class="edit">Edit</button>
              <button class="delete">Delete</button>
              <form><input placeholder="Add a comment"><button type="button" class="comment">Comment</button></form>
            </article>
          </div>
          <div class="scroll">
            <svg width="15" height="24"><path d="M3.500 10h8l-4-4.500z" fill="#505050" /></svg>
            <i class="thumb"></i>
            <svg class="end" width="15" height="16"><path d="M3.500 6h8l-4 4.500z" fill="#505050" /></svg>
          </div>
        </div>
      </div>
    </main>

    <!-- host taskbar -->
    <footer class="taskbar">
      <div class="start"><svg width="16" height="16"><use href="#i-win" /></svg></div>
      <div class="find"><svg width="16" height="16"><use href="#i-search" /></svg><span v-fit="128">Type here to search</span><svg class="castle" width="80" height="38"><use href="#i-castle" /></svg></div>
      <div class="apps">
        <div v-for="(a, i) in apps" :key="i" class="appcell">
          <div class="slotin" :class="{ open: a.open }"><svg width="26" height="26"><use :href="'#i-' + a.icon" /></svg><b v-if="a.badge" class="badge" :class="a.tint">{{ a.badge }}</b></div>
        </div>
      </div>
      <div class="tray">
        <svg width="22" height="22"><use href="#i-moon" /></svg>
        <span v-fit="27" class="temp">54°F</span><span v-fit="32" class="sky">Clear</span>
        <svg class="up" width="12" height="8"><use href="#i-up" /></svg>
        <svg class="vol" width="17" height="14"><use href="#i-vol" /></svg>
        <svg class="batt" width="17" height="14"><use href="#i-batt" /></svg>
        <span v-fit="23" class="lang2">ENG</span>
        <div class="when"><span v-fit="43">5:05 AM</span><span v-fit="47">04/18/24</span></div>
        <div class="notes"><svg width="16" height="16"><use href="#i-note" /></svg><b>2</b></div>
        <svg class="cop" width="21" height="20"><use href="#i-copilot" /></svg>
      </div>
    </footer>
  </div>
</template>

<style>
body { margin: 0; overflow: hidden; }
</style>

<style scoped>
* { box-sizing: border-box; }
.screen { width: 1366px; height: 768px; overflow: hidden; display: flex; flex-direction: column; background: #000; font-family: "Noto Sans", "Open Sans", sans-serif; font-size: 12px; color: #222; }
.defs { position: absolute; }
svg { display: block; flex: none; }
span, s { display: inline-block; white-space: pre; flex: none; }
button { font-family: inherit; padding: 0; }
h1, h2, h3, p { margin: 0; }

/* browser chrome shared by host and guest */
.browser { background: #fff; }
.strip { display: flex; align-items: center; height: 40px; background: var(--theme); }
.tabsearch { width: 28px; height: 28px; margin-left: 6px; border: 0; border-radius: 9px; background: #fff; display: grid; place-items: center; }
.tab { width: var(--cell); height: 40px; padding-top: 6px; position: relative; flex: none; }
.face { width: calc(var(--cell) - 6px); height: 34px; display: flex; align-items: center; padding-left: 8px; padding-bottom: 6px; position: relative; }
.title { width: calc(var(--cell) - 71px); margin-left: 8px; overflow: hidden; mask-image: linear-gradient(90deg, #000 62%, transparent 104%); color: #454c42; }
.close { margin-left: auto; margin-right: var(--closegap); color: #4b5547; }
.tab.sep::after { content: ""; position: absolute; right: 2px; top: 12px; width: 2px; height: 16px; background: #fff; }
.active .face { background: #fff; border-radius: 10px 10px 0 0; }
.active .title { color: #222; }
.active .close { color: #222; }
.active .face::before, .active .face::after { content: ""; position: absolute; bottom: 0; width: 10px; height: 10px; }
.active .face::before { left: -10px; background: radial-gradient(circle at 0 0, transparent 9.500px, #fff 10px); }
.active .face::after { right: -10px; background: radial-gradient(circle at 100% 0, transparent 9.500px, #fff 10px); }
.winctl { display: flex; margin-left: auto; }
.tools { height: 46px; display: flex; align-items: center; padding-left: 4px; background: #fff; color: #252628; }
.cell { width: 36px; height: 36px; display: grid; place-items: center; font-style: normal; flex: none; }
.dim { color: #a5a5a5; }
.omni { height: 34px; margin-left: 8px; border-radius: 17px; background: #e0e0e0; display: flex; align-items: center; font-size: 14px; color: #5f6163; flex: none; }
.dark { color: #1f2022; }
.fav { margin-left: auto; margin-right: 15px; color: #5b5d60; }
.exts { display: flex; margin-left: 8px; }
.rule { width: 2px; height: 16px; margin: 0 8px; background: var(--theme); flex: none; }
.avatar { width: 20px; height: 20px; border-radius: 50%; display: grid; place-items: center; color: #fff; font-weight: 400; font-size: 11px; background: #455a64; }
.marks { height: 34px; padding-bottom: 6px; display: flex; align-items: center; background: #fff; }
.mark { display: flex; align-items: center; gap: 6px; }

.host { --theme: #cbe9c0; --cell: 123px; --closegap: 11px; height: 120px; background: var(--theme); flex: none; }
.host .tabsearch { margin-right: 6px; }
.host .title { width: 53px; }
.host .newtab { margin-left: 8px; color: #68795f; }
.host .tools { border-radius: 10px 10px 0 0; }
.host .omni { width: 928px; padding-left: 5px; font-size: 13.500px; }
.host .omni span { margin-top: -1px; }
.site { width: 24px; height: 24px; border-radius: 50%; background: #fff; display: grid; place-items: center; margin-right: 8px; }
.host .marks { padding-left: 12.500px; gap: 16px; font-size: 11.700px; }
.more { margin-left: auto; margin-right: 30px; }

/* console header */
.console { height: 62px; border-top: 1px solid #c9c9c9; border-bottom: 1px solid #bdbdbd; background: #fafafa; display: flex; justify-content: space-between; flex: none; font-family: Lato, "Open Sans", sans-serif; }
.vm { padding-left: 10px; color: #565656; }
.vm h1 { font-size: 17px; font-weight: 600; line-height: 24px; }
.console p { font-size: 11.500px; line-height: 16px; color: #666; }
.vm p { margin-top: 14px; }
.actions { padding: 5px 10px 0 0; }
.row { display: flex; gap: 10px; align-items: flex-start; height: 33px; padding-right: 5px; }
.lang { width: 119px; height: 29px; border: 1px solid #b4b4b4; border-radius: 3px; background: #fff; display: flex; align-items: center; padding: 0 4px 0 32px; justify-content: space-between; font: 12px "Liberation Sans", Arial, sans-serif; color: #222; }
.send { height: 23px; border: 1px solid #0079b8; border-radius: 3px; background: transparent; color: #0079b8; font-size: 11.500px; line-height: 21px; padding-left: 1px; }
.w1 { width: 157px; } .w2 { width: 111px; } .w3 { width: 163px; }
.actions p { text-align: right; }

/* guest top bar */
.topbar { height: 32px; border-top: 5px solid #000; background: #131313; color: #eee; font-size: 14px; display: flex; align-items: center; padding-left: 18px; flex: none; }
.topbar > span { margin-top: -2px; }
.topbar > svg { margin-left: 36px; margin-top: -1px; }
.app { margin-left: 6px; }
.clock { margin-left: 432px; }
.status { display: flex; gap: 12px; margin-left: auto; margin-right: 18px; margin-top: -2px; }

.guest { height: 514px; display: flex; flex: none; overflow: hidden; }
.dock { width: 70px; background: linear-gradient(165deg, #1a0d14 60%, #26121f); display: flex; flex-direction: column; align-items: center; flex: none; }
.slot { width: 70px; height: 44px; display: grid; place-items: center; position: relative; flex: none; margin-bottom: 24px; }
.slot.doc { height: 36px; margin-bottom: 5px; align-items: start; padding-top: 6px; }
.slot:nth-child(2) { margin-bottom: 28px; }
.slot:nth-child(3) { margin-bottom: 13px; }
.dock hr { width: 48px; height: 1px; border: 0; margin: 0 0 3px; background: #c9c4c7; flex: none; }
.slot.current { width: 64px; height: 64px; border-radius: 12px; background: #473c43; margin-bottom: 14px; }
.slot.last { margin-bottom: 22px; }
.run::before { content: ""; position: absolute; left: 3px; top: calc(50% - 3px); width: 6px; height: 6px; border-radius: 50%; background: #eb5420; }
.current::before { left: 0; }

.inner { --theme: #ffdd5f; --cell: 179px; --closegap: 11px; flex: 1; display: flex; flex-direction: column; font-size: 14px; background: var(--theme); }
.inner .tabsearch { margin-right: 7px; }
.inner .title { color: #3b382b; mask-image: linear-gradient(90deg, #000 80%, transparent 102%); }
.inner .title span, .inner .mark span, .inner .all span, .inner .omni span, .inner .omni s { position: relative; top: -1px; }
.inner .close { color: #25241f; }
.inner .newtab { margin-left: 8px; }
.inner .winctl { margin-right: 1px; }
.inner .tools { border-radius: 8px 8px 0 0; }
.inner .omni { width: 720px; padding-left: 5px; }
.chip { width: 112px; height: 24px; border-radius: 12px; background: #fff; display: flex; align-items: center; gap: 6px; padding-left: 8px; color: #b3261e; font-weight: 600; margin-right: 8px; }
.omni s { color: #b3261e; }
.paused { width: 98px; height: 34px; border-radius: 17px; margin-left: 4px; background: #ecf3fc; color: #1967d2; display: flex; align-items: center; gap: 6px; padding-left: 10px; flex: none; }
.paused .avatar { background: #00579e; }
.paused span, .finish span { margin-top: -2px; }
.finish { width: 137px; height: 34px; border-radius: 17px; margin-left: 5px; background: #ffdd5f; color: #2c2718; display: flex; align-items: center; gap: 3px; padding-left: 15px; flex: none; }
.inner .marks { padding-left: 12px; gap: 20px; }
.all { display: flex; align-items: center; margin-left: auto; margin-right: 14px; }
.all .rule { margin: 0 16px 0 0; }
.all span { margin-left: 7px; }

/* page in the guest browser */
.viewport { flex: 1; min-height: 0; border-top: 1px solid #c9c9c9; background: #f0f2f5; display: flex; justify-content: flex-end; font-family: "Liberation Sans", Arial, sans-serif; font-size: 16px; color: #000; overflow: hidden; }
.card { width: 842px; height: 480px; margin-right: 219px; border: 1px solid #dddfe2; border-top: 0; border-radius: 6px 6px 0 0; background: #fff; padding: 20px 20px 0 19.500px; }
h2 { font-size: 24px; line-height: 28px; color: #1877f2; }
h3 { font-size: 18px; line-height: 22px; margin-top: 19px; color: #333; }
.links { display: flex; gap: 14.600px; line-height: 18px; margin-top: 15px; color: #007bff; }
.card hr { height: 1px; margin: 20px 0; border: 0; background: #ddd; }
.posts { margin: 0; color: #007bff; font-size: 18.500px; }
article { margin-top: 19px; height: 240px; border: 1px solid #ddd; border-radius: 4px; background: #f9f9f9; padding: 31px 15px 0; }
article p { line-height: 18px; margin-bottom: 16px; }
article p:nth-child(3) { margin-bottom: 5px; }
article button { display: block; height: 21px; border: 1px solid #767676; border-radius: 3px; background: #efefef; font: 13.333px "Liberation Sans", Arial, sans-serif; color: #000; }
.edit { width: 38px; }
.delete { width: 54px; }
form { display: flex; }
input { width: 205px; height: 21px; border: 1px solid #767676; border-radius: 2px; padding: 1px 3px; font: 13.333px "Liberation Sans", Arial, sans-serif; background: #fff; }
input::placeholder { color: #757575; }
.comment { width: 73px; }
.scroll { width: 15px; background: #f6f6f6; display: flex; flex-direction: column; align-items: center; }
.thumb { width: 11px; height: 174px; background: #c1c1c1; }
.end { margin-top: auto; }

/* host taskbar */
.taskbar { height: 40px; background: #1e1e1e; display: flex; align-items: center; color: #f3f3f3; flex: none; }
.start { width: 48px; display: grid; place-items: center; }
.find { width: 288px; height: 40px; border: 1px solid #bdbdbd; background: #f2f2f2; color: #333; display: flex; align-items: center; padding-left: 11px; font-size: 14px; overflow: hidden; }
.find span { margin-left: 12px; }
.castle { margin-left: auto; }
.apps { display: flex; margin-left: -1px; }
.appcell { width: 49.400px; height: 40px; display: flex; justify-content: center; }
.slotin { width: 40px; height: 40px; display: grid; place-items: center; position: relative; border-bottom: 3px solid transparent; padding-top: 3px; }
.open { border-color: #76b9ed; }
.badge { position: absolute; right: 6px; top: 17px; width: 15px; height: 15px; border-radius: 50%; display: grid; place-items: center; font-size: 9px; font-weight: 400; background: #455a64; color: #fff; }
.purple { background: #7b1fa2; }
.tray { margin-left: auto; height: 40px; width: 379px; display: flex; align-items: center; font-size: 13px; }
.temp { margin-left: 9px; }
.sky { margin-left: 9px; }
.up { margin-left: 24px; }
.vol { margin-left: 9px; }
.batt { margin-left: 8px; }
.lang2 { margin-left: 9px; font-size: 12px; }
.when { width: 60px; margin-left: 7px; display: flex; flex-direction: column; align-items: center; font-size: 12px; line-height: 18px; }
.notes { position: relative; margin-left: 13px; }
.notes b { position: absolute; left: 7px; top: 6px; width: 17px; height: 17px; border-radius: 50%; background: #2b2b2b; border: 1px solid #999; display: grid; place-items: center; font-size: 11px; font-weight: 600; }
.cop { margin-left: 21px; }
.tray::after { content: ""; width: 1px; height: 40px; background: #606060; margin-left: 17px; }
</style>
